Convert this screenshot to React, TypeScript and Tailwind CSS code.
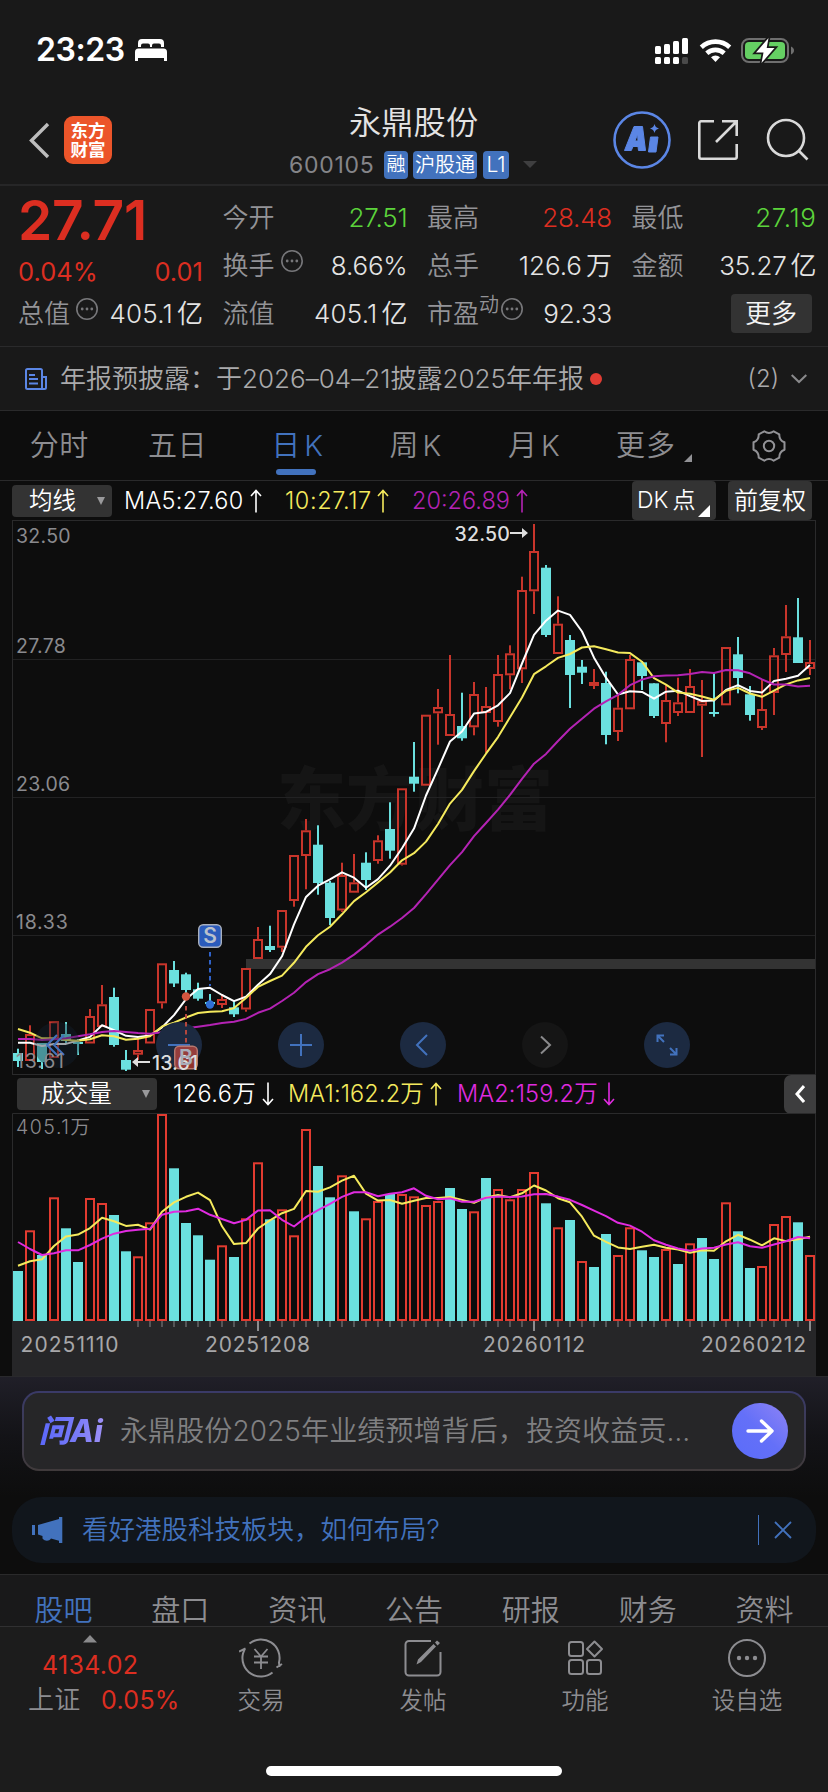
import React from 'react';

type Tone = 'u' | 'd';
// [direction, high, body top, body bottom, low, volume direction, volume top]
type Bar = [Tone, number, number, number, number, Tone, number];

const BARS: Bar[] = [
  ['d', 1048.7, 1053, 1061, 1067, 'd', 1271],
  ['u', 1025.3, 1034, 1061, 1061, 'u', 1230.3],
  ['d', 1043, 1043, 1062, 1069, 'd', 1255],
  ['u', 1021.3, 1021.3, 1058, 1058, 'u', 1197.3],
  ['d', 1022, 1034, 1041, 1043, 'd', 1228.3],
  ['d', 1039, 1042, 1044, 1055, 'd', 1262],
  ['u', 1009, 1016, 1043.5, 1043.5, 'u', 1198],
  ['u', 985, 1004.3, 1027, 1027, 'u', 1203],
  ['d', 987.7, 997, 1045, 1046.7, 'd', 1215],
  ['d', 1050, 1060, 1069.7, 1071, 'd', 1251.3],
  ['u', 1038, 1050, 1054.7, 1060, 'u', 1256.3],
  ['u', 1009, 1009, 1043.5, 1043.5, 'u', 1222.3],
  ['u', 963.3, 963.3, 1003.3, 1008.5, 'u', 1114],
  ['d', 961, 970, 983.5, 987, 'd', 1168.3],
  ['d', 972.7, 974.3, 990, 993, 'd', 1223],
  ['d', 982.7, 989.3, 998.7, 1000.7, 'd', 1235.3],
  ['d', 994, 1002, 1003.7, 1006, 'd', 1259.7],
  ['u', 994, 999, 1005, 1008, 'u', 1245.3],
  ['d', 1001.7, 1007.3, 1014.3, 1017, 'd', 1257],
  ['u', 968, 968, 1009.5, 1011.7, 'u', 1218.3],
  ['u', 927, 939, 959, 959, 'u', 1162.3],
  ['d', 925.7, 946, 950, 952, 'd', 1219.3],
  ['u', 910, 910, 947.7, 952, 'u', 1209.3],
  ['u', 855, 855, 901, 906.7, 'u', 1235.3],
  ['u', 819, 830.3, 856, 889.3, 'u', 1129],
  ['d', 825.3, 844.7, 883, 894.7, 'd', 1166],
  ['d', 881, 882.7, 918, 925, 'd', 1197.3],
  ['u', 862.7, 875, 910.5, 912, 'u', 1175.3],
  ['u', 854, 882.3, 892.7, 892.7, 'd', 1211.3],
  ['d', 852.3, 862.7, 880, 890, 'u', 1218.3],
  ['u', 835.3, 840.3, 861, 863.7, 'u', 1201],
  ['d', 802.3, 829, 850.7, 858.7, 'd', 1194],
  ['u', 788.3, 788.3, 864.7, 865.5, 'u', 1194],
  ['d', 742, 776.7, 783.7, 791.7, 'u', 1196.3],
  ['u', 714.7, 714.7, 785.7, 785.7, 'u', 1205],
  ['u', 689, 707, 713.3, 744.7, 'u', 1201],
  ['u', 655, 714, 736, 736, 'd', 1188],
  ['d', 692.7, 726, 738.3, 740.7, 'd', 1209],
  ['u', 682, 694, 727.3, 735.3, 'u', 1211.3],
  ['u', 687, 706, 713, 752.7, 'd', 1178],
  ['u', 655, 674, 722, 726.7, 'u', 1189],
  ['u', 645.3, 653.3, 675.3, 689.3, 'u', 1199.3],
  ['u', 576.7, 590, 669.3, 683, 'u', 1189],
  ['u', 524, 551, 591.3, 614, 'u', 1172],
  ['d', 565, 567.7, 635, 637, 'd', 1203.3],
  ['u', 596.3, 623.7, 654, 654, 'u', 1227.3],
  ['d', 635, 640, 675, 708, 'd', 1220],
  ['d', 660, 666.7, 672.7, 684, 'u', 1261],
  ['u', 669, 682, 686, 689, 'd', 1267],
  ['d', 671.7, 683, 735, 744.3, 'd', 1234],
  ['u', 693, 707.7, 732, 741, 'u', 1255],
  ['u', 655, 659, 709.3, 709.3, 'u', 1227.3],
  ['d', 662.3, 662.3, 676, 690, 'd', 1250.3],
  ['d', 683.3, 683.3, 716, 718, 'd', 1257],
  ['u', 685, 700, 724, 742.3, 'u', 1249],
  ['u', 677.7, 702.3, 713, 716, 'd', 1264],
  ['u', 669, 686, 713, 713, 'u', 1243.3],
  ['u', 680, 700.7, 705.7, 757, 'd', 1238],
  ['d', 672.7, 712, 714, 716.7, 'd', 1259],
  ['u', 647, 647, 705.3, 705.3, 'u', 1202.3],
  ['d', 637, 654.3, 678, 693.3, 'd', 1231.3],
  ['d', 686, 694.3, 715, 720.7, 'd', 1268],
  ['u', 680, 709, 728, 730, 'u', 1266],
  ['u', 648, 655.3, 693, 715, 'u', 1224],
  ['u', 605, 636.3, 655, 672, 'u', 1216],
  ['d', 598, 637.3, 663, 663, 'd', 1222.3],
  ['u', 640, 662, 669, 675, 'u', 1255],
];

const barX = (i: number) => 18 + i * 12;
const CLOSES = BARS.map((b) => (b[0] === 'u' ? b[2] : b[3]));
const VOLUMES = BARS.map((b) => b[6]);

/** Moving average; the seed holds the values whose window starts before the first bar. */
function average(values: number[], n: number, seed: number[]) {
  return values
    .map((_, i) => {
      const y = i < n - 1 ? seed[i] : values.slice(i - n + 1, i + 1).reduce((a, b) => a + b, 0) / n;
      return `${barX(i)},${y.toFixed(1)}`;
    })
    .join(' ');
}

const MA5 = average(CLOSES, 5, [1042.7, 1042.7, 1046, 1044]);
const MA10 = average(CLOSES, 10, [1029, 1032.7, 1038.3, 1038.3, 1040, 1040.7, 1039.3, 1035.3, 1036.3]);
const MA20 = average(CLOSES, 20, [
  1039, 1039, 1040, 1039.3, 1038.3, 1036.3, 1034.3, 1032, 1031, 1032, 1033, 1033.7, 1032.3, 1030.7, 1028.3, 1026.7, 1025,
  1023, 1021.7,
]);
const VMA1 = average(VOLUMES, 5, [1265.7, 1261.3, 1259.3, 1246]);
const VMA2 = average(VOLUMES, 10, [1242, 1249, 1255, 1253.3, 1250.3, 1250.3, 1245, 1238.7, 1233.7]);

const UP = '#c8352b';
const DOWN = '#6be0df';
const FONT = 'Inter, "Noto Sans CJK SC", sans-serif';

function Candle({ bar, i }: { bar: Bar; i: number }) {
  const [tone, high, top, bottom, low] = bar;
  const x = barX(i);
  if (tone === 'd')
    return (
      <g fill={DOWN}>
        <rect x={x - 1} y={high} width="2" height={low - high} />
        <rect x={x - 5} y={top} width="10" height={Math.max(2, bottom - top)} />
      </g>
    );
  return (
    <g>
      <rect x={x - 1} y={high} width="2" height={top - high} fill={UP} />
      <rect x={x - 1} y={bottom} width="2" height={low - bottom} fill={UP} />
      <rect x={x - 4} y={top + 1} width="8" height={bottom - top - 2} fill="none" stroke={UP} strokeWidth="2" />
    </g>
  );
}

function PriceChart() {
  return (
    <svg viewBox="12 520 804 555" className="block h-[555px] w-[804px]" fontFamily={FONT}>
      <text x="277" y="825" fontSize="69" fontWeight="900" fill="#151515" textLength="276">
        东方财富
      </text>
      <g stroke="#222223" strokeWidth="1">
        <rect x="12.5" y="520.5" width="803" height="554" fill="none" stroke="#2a2a2b" />
        <path d="M13 659.5H815M13 797.5H815M13 935.5H815" />
      </g>
      <rect x="246" y="959" width="569" height="10" fill="#333333" />
      {BARS.map((b, i) => (
        <Candle key={i} bar={b} i={i} />
      ))}
      <g fill="none" strokeWidth="2" strokeLinejoin="round">
        <polyline points={MA5} stroke="#ffffff" />
        <polyline points={MA10} stroke="#f5ea5d" />
        <polyline points={MA20} stroke="#b423b4" />
      </g>
      <g fontSize="19.5" fill="#8a8a8e" letterSpacing="0.3">
        <text x="16" y="543">32.50</text>
        <text x="16" y="653">27.78</text>
        <text x="16" y="791">23.06</text>
        <text x="16" y="929" textLength="52">18.33</text>
      </g>
      <g fill="#dedede" fontSize="19.5" fontWeight="500">
        <text x="454.5" y="541" letterSpacing="0.2">32.50</text>
        <path d="M510 532h12v-4l6 5-6 5v-4h-12z" />
        <path d="M150 1061h-12v-4l-6 5 6 5v-4h12z" />
      </g>
    </svg>
  );
}

function Markers() {
  return (
    <svg viewBox="12 520 804 555" className="pointer-events-none absolute inset-0 h-[555px] w-[804px]" fontFamily={FONT}>
      <text x="16" y="1067.5" fontSize="19.5" fill="#8a8a8e" textLength="48">13.61</text>
      <path d="M210 952v34" stroke="#2f62c8" strokeWidth="2" strokeDasharray="4.5 3.5" />
      <circle cx="210" cy="1004.5" r="4.2" fill="#2f6fd6" />
      <rect x="198.7" y="924.7" width="22.6" height="22.6" rx="4.5" fill="#2b5bbb" stroke="#a9b0bd" strokeWidth="1.4" />
      <text x="210" y="943.4" fontSize="21" fontWeight="600" fill="#b9c0cc" textAnchor="middle">S</text>
      <path d="M186 1006v38" stroke="#b4473d" strokeWidth="2" strokeDasharray="4.5 3.5" />
      <circle cx="186" cy="996.5" r="4.2" fill="#d4553f" />
      <rect x="174.7" y="1046.2" width="22.6" height="22.6" rx="4.5" fill="#d9483a" fillOpacity="0.65" stroke="#b5786f" strokeWidth="1.4" />
      <text x="152" y="1069.5" fontSize="19.5" fontWeight="500" fill="#dedede" textLength="46">13.61</text>
      <text x="186" y="1064.8" fontSize="21" fontWeight="600" fill="#a9adba" textAnchor="middle">B</text>
    </svg>
  );
}

function VolumeChart() {
  return (
    <svg viewBox="12 1113 804 263" className="block h-[263px] w-[804px]" fontFamily={FONT}>
      <path d="M12.5 1321V1113.5H815.5V1321" fill="none" stroke="#2a2a2b" />
      <rect x="12" y="1321" width="804" height="55" fill="#262628" />
      {BARS.map(([, , , , , tone, top], i) =>
        tone === 'd' ? (
          <rect key={i} x={barX(i) - 5} y={top} width="10" height={1321 - top} fill={DOWN} />
        ) : (
          <rect key={i} x={barX(i) - 4} y={top + 1} width="8" height={1319 - top} fill="none" stroke="#e23b30" strokeWidth="2" />
        ),
      )}
      {BARS.slice(10).map((_, k) => {
        const i = k + 10;
        const major = i === 20 || i === 43 || i === 66;
        return (
          <rect key={i} x={barX(i) - 1} y="1321" width="2" height={major ? 10 : 6} fill={major ? '#8c8c8e' : '#555557'} />
        );
      })}
      <g fill="none" strokeWidth="2" strokeLinejoin="round">
        <polyline points={VMA1} stroke="#f5ea5d" />
        <polyline points={VMA2} stroke="#e02be0" />
      </g>
      <text x="16" y="1133.5" fontSize="19.5" fill="#8a8a8e" fontWeight="350" textLength="74">405.1万</text>
      <g fontSize="21" fill="#a7a7a9">
        <text x="20.5" y="1352" textLength="98">20251110</text>
        <text x="205" y="1352" textLength="105">20251208</text>
        <text x="483" y="1352" textLength="102">20260112</text>
        <text x="701" y="1352" textLength="105">20260212</text>
      </g>
    </svg>
  );
}

function Arrow({ down }: { down?: boolean }) {
  return (
    <svg width="12" height="24" viewBox="0 0 12 24" fill="none" stroke="currentColor" strokeWidth="1.6" className={down ? 'shrink-0 rotate-180' : 'shrink-0'}>
      <path d="M6 23.500V2M1 7 6 1.500 11 7" />
    </svg>
  );
}

function Info() {
  return (
    <svg width="24" height="24" viewBox="0 0 24 24" className="mb-2 shrink-0 text-[#77777a]">
      <circle cx="12" cy="12" r="10.2" fill="none" stroke="currentColor" strokeWidth="1.6" />
      <g fill="currentColor">
        <circle cx="7.2" cy="12" r="1.4" />
        <circle cx="12" cy="12" r="1.4" />
        <circle cx="16.8" cy="12" r="1.4" />
      </g>
    </svg>
  );
}

type StatProps = { label: string; value: string; unit?: string; color?: string; info?: boolean; sup?: string; tracking?: string };

function Stat({ label, value, unit, color = 'text-[#e4e4e4]', info, sup, tracking = 'tracking-[-0.200px]' }: StatProps) {
  return (
    <div className="flex h-12 items-center whitespace-nowrap">
      <span className="text-[26px] font-[350] text-[#939397]">{label}</span>
      {sup && <span className="mb-4 text-[20px] font-[350] text-[#939397]">{sup}</span>}
      {info && <span className={sup ? 'ml-px' : 'ml-[5px]'}><Info /></span>}
      <span className={`ml-auto text-[26px] font-[360] ${tracking} ${color}`}>{value}</span>
      {unit && <span className={`ml-1 text-[26px] font-[350] ${color}`}>{unit}</span>}
    </div>
  );
}

function StatusBar() {
  return (
    <div className="flex h-[100px] items-center pl-9 pr-[34px] text-white">
      <span className="w-[99px] text-[32px] font-semibold tracking-[-0.450px]">23:23</span>
      <svg width="32" height="22" viewBox="0 0 32 22" fill="currentColor">
        <path d="M3 8V4a4 4 0 0 1 4-4h18a4 4 0 0 1 4 4v4h-3V6.500a2 2 0 0 0-2-2h-5a2 2 0 0 0-2 2V8h-2V6.500a2 2 0 0 0-2-2H8a2 2 0 0 0-2 2V8Z" />
        <path d="M0 22V13a3.500 3.500 0 0 1 3.500-3.500h25A3.500 3.500 0 0 1 32 13v9h-3v-3H3v3Z" />
      </svg>
      <svg width="140" height="28" viewBox="654 35 140 28" className="ml-auto">
        <g fill="#fff">
          <rect x="655" y="45" width="6" height="8" rx="1.5" />
          <rect x="664" y="43" width="6" height="10" rx="1.5" />
          <rect x="673" y="40" width="6" height="13" rx="1.5" />
          <rect x="682" y="37" width="6" height="16" rx="1.5" />
          <rect x="655" y="56" width="6" height="7" rx="1.5" />
          <rect x="664" y="56" width="6" height="7" rx="1.5" />
          <rect x="673" y="56" width="6" height="7" rx="1.5" />
          <rect x="682" y="56" width="6" height="7" rx="1.5" fill="#4a4a4a" />
        </g>
        <g fill="none" stroke="#fff" strokeWidth="4.6">
          <path d="M701.300 46.200a21 21 0 0 1 28.400 0" />
          <path d="M706.800 52.200a13 13 0 0 1 17.400 0" />
        </g>
        <path d="M715.500 61l-4.500-4.800a6.800 6.800 0 0 1 9 0Z" fill="#fff" />
        <rect x="742" y="38" width="46" height="23" rx="7" fill="none" stroke="#6f6f6f" strokeWidth="2" />
        <rect x="745" y="41" width="40" height="17" rx="4" fill="#65cf63" />
        <path d="M791 45.500c4 1.500 4 6.500 0 8Z" fill="#6f6f6f" />
        <path d="M768.500 37 756 51.500h7.500L761.500 62 774.500 47h-7.800Z" fill="#fff" stroke="#191919" strokeWidth="3.500" paintOrder="stroke" />
      </svg>
    </div>
  );
}

function Header() {
  return (
    <div className="flex h-[86px] items-start border-b-2 border-[#262627] pt-[13px]">
      <svg width="24" height="40" viewBox="0 0 24 40" fill="none" stroke="#bdbdbd" strokeWidth="3.400" className="ml-[27px] mt-[7px]">
        <path d="M21 4 4.500 20.500 21 37" />
      </svg>
      <div className="ml-[13px] mt-[3px] flex h-12 w-12 flex-col items-center justify-center rounded-[9px] bg-[#ec552a] text-[17.500px] font-bold leading-[19.500px] text-white">
        <span>东方</span>
        <span>财富</span>
      </div>
      <div className="ml-[154px] w-[304px] pl-[23px]">
        <div className="ml-[60px] mt-[-8px] h-[36px] text-[32.300px] font-[350] leading-[36px] text-[#e4e4e4]">永鼎股份</div>
        <div className="mt-[10px] flex h-7 items-center whitespace-nowrap text-[23px]">
          <span className="w-[95px] tracking-[0.700px] text-[#858589]">600105</span>
          <span className="flex h-7 w-6 items-center justify-center rounded bg-[#4272bd] text-[19px] font-[350] text-white">融</span>
          <span className="ml-[5px] flex h-7 w-16 items-center justify-center rounded bg-[#4272bd] text-[20px] font-[350] text-white">沪股通</span>
          <span className="ml-[6px] flex h-7 w-[26px] items-center justify-center rounded bg-[#4272bd] text-[21px] font-[350] text-white">L1</span>
          <svg width="14" height="8" viewBox="0 0 14 8" className="ml-3.5"><path d="M0 0h14L7 7Z" fill="#3f3f40" /></svg>
        </div>
      </div>
      <svg width="60" height="60" viewBox="612 110 60 60" className="ml-[42px] mt-[-3px]">
        <circle cx="642" cy="140" r="27.500" fill="none" stroke="#5b86e5" strokeWidth="2.600" />
        <path d="M624.500 150.500 634 126.500h8.500L645.500 150.500h-7l-.5-4h-5l-1.700 4ZM635 141h3l-.4-7Z" fill="#5b86e5" stroke="#5b86e5" strokeLinejoin="round" fillRule="evenodd" />
        <path d="M650.500 137h7.500l-2 15h-7.500Z" fill="#5b86e5" stroke="#5b86e5" strokeLinejoin="round" />
        <path d="M654.500 124c.8 2.800 1.700 3.700 4.500 4.500-2.800.8-3.700 1.700-4.500 4.500-.8-2.800-1.700-3.700-4.500-4.500 2.800-.8 3.700-1.700 4.500-4.500Z" fill="#5b86e5" />
      </svg>
      <svg width="40" height="40" viewBox="698 120 40 40" fill="none" stroke="#d9d9d9" strokeWidth="2.600" className="ml-[26px] mt-[7px]">
        <path d="M714 121.300h-13a1.700 1.700 0 0 0-1.700 1.700v34a1.700 1.700 0 0 0 1.700 1.700h34a1.700 1.700 0 0 0 1.700-1.700v-13M722 121.300h14.700V136M736 122 716 142" />
      </svg>
      <svg width="44" height="44" viewBox="766 118 44 44" fill="none" stroke="#d9d9d9" strokeWidth="2.600" className="ml-[28px] mt-[5px]">
        <circle cx="786" cy="138" r="18" />
        <path d="M798.500 150.500l9 9" />
      </svg>
    </div>
  );
}

function Stats() {
  return (
    <div className="flex h-[160px] gap-[19.500px] pl-[18px] pt-[7px]">
      <div className="w-[185px]">
        <div className="h-[61px] text-[55px] font-semibold leading-[54px] tracking-[-0.300px] text-[#dc2e21]">27.71</div>
        <div className="flex h-[35px] items-center justify-between text-[25.500px] font-[380] text-[#dc2e21]">
          <span className="pt-0.5">0.04%</span>
          <span className="pt-0.5">0.01</span>
        </div>
        <Stat label="总值" info value="405.1" unit="亿" tracking="tracking-[0.200px]" />
      </div>
      <div className="w-[185px]">
        <Stat label="今开" value="27.51" color="text-[#5cd43b]" />
        <Stat label="换手" info value="8.66%" />
        <Stat label="流值" value="405.1" unit="亿" tracking="tracking-[0.200px]" />
      </div>
      <div className="w-[185px]">
        <Stat label="最高" value="28.48" color="text-[#dc2e21]" />
        <Stat label="总手" value="126.6" unit="万" tracking="tracking-[0]" />
        <Stat label="市盈" sup="动" info value="92.33" />
      </div>
      <div className="w-[185px]">
        <Stat label="最低" value="27.19" color="text-[#5cd43b]" tracking="tracking-[0.600px]" />
        <Stat label="金额" value="35.27" unit="亿" tracking="tracking-[-0.200px]" />
        <div className="flex h-12 items-center justify-end pr-[5px]">
          <button className="h-[39px] w-[81px] rounded bg-[#333333] pb-px text-[26px] font-[350] text-[#f4f4f4]">更多</button>
        </div>
      </div>
    </div>
  );
}

function Notice() {
  return (
    <div className="flex h-[65px] items-center whitespace-nowrap border-y border-[#2a2a2b] pl-[25px] text-[26px] font-[350] text-[#aaaaac]">
      <svg width="22" height="22" viewBox="0 0 22 22" fill="none" stroke="#5b86e5" strokeWidth="2">
        <path d="M17 21H2.500A1.500 1.500 0 0 1 1 19.500v-17A1.500 1.500 0 0 1 2.500 1h13A1.500 1.500 0 0 1 17 2.500ZM17 9h4v10.500a1.500 1.500 0 0 1-1.500 1.500H17M4 7h6M4 11h9M4 15.500h9" />
      </svg>
      <span className="ml-[13px] w-[156px]">年报预披露：</span>
      <span className="w-[374px] tracking-[0.020px]">于2026–04–21披露2025年年报</span>
      <span className="h-3 w-3 rounded-full bg-[#e03c33]" />
      <span className="ml-auto text-[24px]">(2)</span>
      <svg width="16" height="10" viewBox="0 0 16 10" fill="none" stroke="#8a8a8c" strokeWidth="2" className="ml-3 mr-[21px]">
        <path d="M.7 1 8 8l7.300-7" />
      </svg>
    </div>
  );
}

function PeriodTabs() {
  return (
    <div className="grid h-[70px] grid-cols-7 border-b border-[#2a2a2b] text-[29px] font-[350] text-[#8d8d91]">
      {['分时', '五日', '日', '周', '月'].map((t, i) => (
        <div key={t} className={`relative flex items-center justify-center pt-px ${i === 2 ? 'text-[#4272bd]' : ''}`}>
          <span className={i < 2 ? 'tracking-[0.500px]' : 'pl-[3px]'}>{t}</span>
          {i >= 2 && <span className="ml-1">K</span>}
          {i === 2 && <span className="absolute bottom-[5px] h-[6px] w-10 rounded-full bg-[#4272bd]" />}
        </div>
      ))}
      <div className="flex items-center justify-center pl-[7px] pt-px tracking-[1px]">
        更多
        <svg width="8" height="8" viewBox="0 0 8 8" className="ml-2 mt-6"><path d="M8 0v8H0Z" fill="#929296" /></svg>
      </div>
      <div className="flex items-center justify-center">
        <svg width="34" height="32" viewBox="0 0 34 32" fill="none" stroke="#929296" strokeWidth="2">
          <path d="M12.300 1.300Q17 4.600 21.700 1.300L27.300 4.300Q27 10.200 32.500 12.300V19.700Q27 21.800 27.300 27.700L21.700 30.700Q17 27.400 12.300 30.700L6.700 27.700Q7 21.800 1.500 19.700V12.300Q7 10.200 6.700 4.300Z" strokeLinejoin="round" />
          <circle cx="17" cy="16" r="5.200" />
        </svg>
      </div>
    </div>
  );
}

const Triangle = () => (
  <svg width="8" height="8" viewBox="0 0 8 8"><path d="M0 0h8L4 8Z" fill="#9a9a9c" /></svg>
);

function Legend() {
  return (
    <div className="flex h-[39px] items-center whitespace-nowrap pl-3 text-[23.500px] font-[350]">
      <button className="flex h-8 w-[100px] items-center rounded-[4px] bg-[#333333] pl-[17px] pr-[7px] text-white">
        <span className="mr-auto">均线</span>
        <Triangle />
      </button>
      <div className="ml-3 flex w-[161px] items-center text-white"><span className="w-[126px] tracking-[0.300px]">MA5:27.60</span><Arrow /></div>
      <div className="flex w-[127px] items-center text-[#f5ea5d]"><span className="w-[92px] tracking-[0.600px]">10:27.17</span><Arrow /></div>
      <div className="flex items-center text-[#b423b4]"><span className="w-[104px]">20:26.89</span><Arrow /></div>
      <button className="relative ml-auto flex h-[39px] w-[84px] items-center gap-1 rounded-[4px] bg-[#333333] pl-[5px] text-[23px] text-white">
        <span>DK</span>
        <span>点</span>
        <svg width="12" height="12" viewBox="0 0 12 12" className="absolute bottom-[3px] right-1.5"><path d="M12 0v12H0Z" fill="#fff" /></svg>
      </button>
      <button className="ml-3 mr-4 h-[39px] w-[84px] rounded-[4px] bg-[#333333] text-[24px] text-white">前复权</button>
    </div>
  );
}

function VolumeLegend() {
  return (
    <div className="flex h-[38px] items-center whitespace-nowrap pl-[17px] text-[23.500px] font-[350] tracking-[0.150px]">
      <button className="flex h-8 w-[140px] items-center rounded-[4px] bg-[#333333] pl-6 pr-[7px] text-white">
        <span className="mr-auto">成交量</span>
        <Triangle />
      </button>
      <div className="ml-4 flex w-[115px] items-center text-white"><span className="w-[89px] tracking-[0.400px]">126.6万</span><Arrow down /></div>
      <div className="flex w-[169px] items-center text-[#f5ea5d]"><span className="w-[142px]">MA1:162.2万</span><Arrow /></div>
      <div className="flex items-center text-[#e02be0]"><span className="w-[146px]">MA2:159.2万</span><Arrow down /></div>
      <button className="ml-auto mr-3 flex h-[39px] w-8 items-center justify-center rounded-l-[7px] bg-[#3d3d3e]">
        <svg width="10" height="18" viewBox="0 0 10 18" fill="none" stroke="#fff" strokeWidth="3"><path d="M9 1 2 9l7 8" /></svg>
      </button>
    </div>
  );
}

function ChartControls() {
  const base = 'flex h-[46px] w-[46px] items-center justify-center rounded-full';
  const icons = ['M7 -10 L-3 0 L7 10 M0 -10 L-10 0 L0 10', 'M-11 0H11', 'M-11 0H11M0 -11V11', 'M4 -10 L-6 0 L4 10', 'M-4 -8.500 L5 0 L-4 8.500', 'M-3 -3 L-9.500 -9.500 M-9.500 -3V-9.500H-3 M3 3 L9.500 9.500 M9.500 3V9.500H3'];
  return (
    <div className="absolute bottom-[7px] left-[22px] flex gap-[76px]">
      {icons.map((d, i) => (
        <div key={i} className={`${base} ${i === 0 ? 'bg-[#13202f]/40' : i === 4 ? 'bg-[#151515]' : 'bg-[#1c2a41]'}`}>
          <svg width="32" height="32" viewBox="-16 -16 32 32" fill="none" stroke={i === 4 ? '#8a8a8c' : '#4272bd'} strokeWidth="2">
            <path d={d} />
          </svg>
        </div>
      ))}
    </div>
  );
}

function AskAi() {
  return (
    <div className="h-[121px] border-t border-[#29292c] bg-gradient-to-b from-[#201f28] via-[#131317] to-[#0d0d0d] px-[22px] pt-[14px]">
      <div className="h-20 rounded-[17px] bg-gradient-to-b from-[#3a3a68] to-[#403a3b] p-[2px]">
        <div className="flex h-full items-center whitespace-nowrap rounded-[15px] bg-[#262628] pl-3.5">
          <span className="w-[82px] bg-gradient-to-r from-[#5a67fa] via-[#7b7cf8] to-[#b79df5] bg-clip-text pl-px text-[31px] font-extrabold italic leading-[36px] text-transparent">问Ai</span>
          <span className="text-[28px] font-[350] tracking-[0.100px] text-[#808082]">永鼎股份2025年业绩预增背后，投资收益贡…</span>
          <div className="ml-auto mr-4 flex h-14 w-14 items-center justify-center rounded-full bg-gradient-to-tr from-[#5a6cfa] via-[#6470f8] to-[#8f83f5]">
            <svg width="28" height="24" viewBox="0 0 28 24" fill="none" stroke="#fff" strokeWidth="3.400" strokeLinecap="round" strokeLinejoin="round">
              <path d="M2 12h24M15.500 2 26 12 15.500 22" />
            </svg>
          </div>
        </div>
      </div>
    </div>
  );
}

function Banner() {
  return (
    <div className="mx-3 flex h-[66px] items-center rounded-[30px] bg-[#11161c] pl-5 text-[#4272bd]">
      <svg width="31" height="26" viewBox="0 0 31 26" fill="currentColor">
        <path d="M0 8h3v10H0ZM6 8 27 2V0h3.300v26H27v-2.300L19 21.500c-2 3-6 3-8.500 0V19L6 17.500Z" />
      </svg>
      <span className="ml-[19px] whitespace-nowrap text-[26.500px] font-[350]">看好港股科技板块，如何布局?</span>
      <span className="ml-auto h-[30px] w-px bg-[#4272bd]" />
      <svg width="18" height="18" viewBox="0 0 18 18" fill="none" stroke="currentColor" strokeWidth="1.800" className="ml-[15px] mr-6">
        <path d="M1 1l16 16M17 1 1 17" />
      </svg>
    </div>
  );
}

function SectionTabs() {
  return (
    <div className="mt-[11px] h-[52px] border-t border-[#2a2a2b] bg-[#19191a] px-[5px] pt-5">
      <div className="grid grid-cols-7 text-center text-[29px] font-[350] leading-[31px] text-[#8d8d91]">
        {['股吧', '盘口', '资讯', '公告', '研报', '财务', '资料'].map((t, i) => (
          <span key={t} className={i === 0 ? 'text-[#4272bd]' : ''}>{t}</span>
        ))}
      </div>
    </div>
  );
}

function Action({ label, children }: { label: string; children: React.ReactNode }) {
  return (
    <div className="flex w-[162px] flex-col items-center pt-[9px] text-[#8d8d91]">
      <svg width="44" height="44" viewBox="-22 -22 44 44" fill="none" stroke="currentColor" strokeWidth="2">{children}</svg>
      <span className="mt-[4px] text-[23.500px] font-[350] leading-[34px]">{label}</span>
    </div>
  );
}

function BottomBar() {
  return (
    <div className="flex h-[166px] flex-col justify-between border-t border-[#303031] bg-[#1c1c1c] pb-4">
      <div className="flex whitespace-nowrap">
        <div className="w-[180px] text-[25px] font-[380] tracking-[0.300px] text-[#dc2e21]">
          <svg width="14" height="8" viewBox="0 0 14 8" className="ml-[83px] mt-2 block"><path d="M7 0l7 7.500H0Z" fill="#8a8a8c" /></svg>
          <div className="ml-[42px] mt-[5px] leading-[34px]">4134.02</div>
          <div className="flex leading-[36px]">
            <span className="ml-7 w-[73px] text-[26px] font-[350] text-[#8d8d91]">上证</span>
            <span>0.05%</span>
          </div>
        </div>
        <Action label="交易">
          <path d="M-11.500 -14.500A18.500 18.500 0 0 1 18 4.500L18.500 9M21 6l-5.500 3.500M11.500 14.500A18.500 18.500 0 0 1 -18 -4.500L-16 -9.500M-22 -6.500l6.500-3" />
          <path d="M-6.500 -9 0 -1.500 6.500 -9M-7 -1.500H7M-7 4.500H7M0 -1.500V11" strokeWidth="1.800" />
        </Action>
        <Action label="发帖">
          <path d="M8 -17H-14A3.500 3.500 0 0 0 -17.500 -13.500V14A3.500 3.500 0 0 0 -14 17.500H14A3.500 3.500 0 0 0 17.500 14V-6" />
          <path d="M-6.500 6.500-5 1.500 10.500 -14 13 -11.500 -2 4Z M12 -15.500l2-2 3 2.500-2.500 2.500Z" fill="currentColor" stroke="none" />
        </Action>
        <Action label="功能">
          <rect x="-16" y="-16" width="14" height="14" rx="2.500" />
          <rect x="-16" y="2" width="14" height="14" rx="2.500" />
          <rect x="2" y="2" width="14" height="14" rx="2.500" />
          <path d="M9.500 -16.500 17 -9 9.500 -1.500 2 -9Z" strokeLinejoin="round" />
        </Action>
        <Action label="设自选">
          <circle r="18" />
          <g fill="currentColor" stroke="none">
            <circle cx="-8" r="2.200" />
            <circle r="2.200" />
            <circle cx="8" r="2.200" />
          </g>
        </Action>
      </div>
      <div className="h-[10px] w-[296px] self-center rounded-full bg-white" />
    </div>
  );
}

export default function App() {
  return (
    <div className="h-[1792px] w-[828px] overflow-hidden bg-[#0d0d0d] font-[Inter,'Noto_Sans_CJK_SC',sans-serif]">
      <div className="bg-[#191919]">
        <StatusBar />
        <Header />
        <Stats />
        <Notice />
      </div>
      <PeriodTabs />
      <Legend />
      <div className="relative mx-3 h-[555px]">
        <PriceChart />
        <ChartControls />
        <Markers />
      </div>
      <VolumeLegend />
      <div className="mx-3">
        <VolumeChart />
      </div>
      <AskAi />
      <Banner />
      <SectionTabs />
      <BottomBar />
    </div>
  );
}
